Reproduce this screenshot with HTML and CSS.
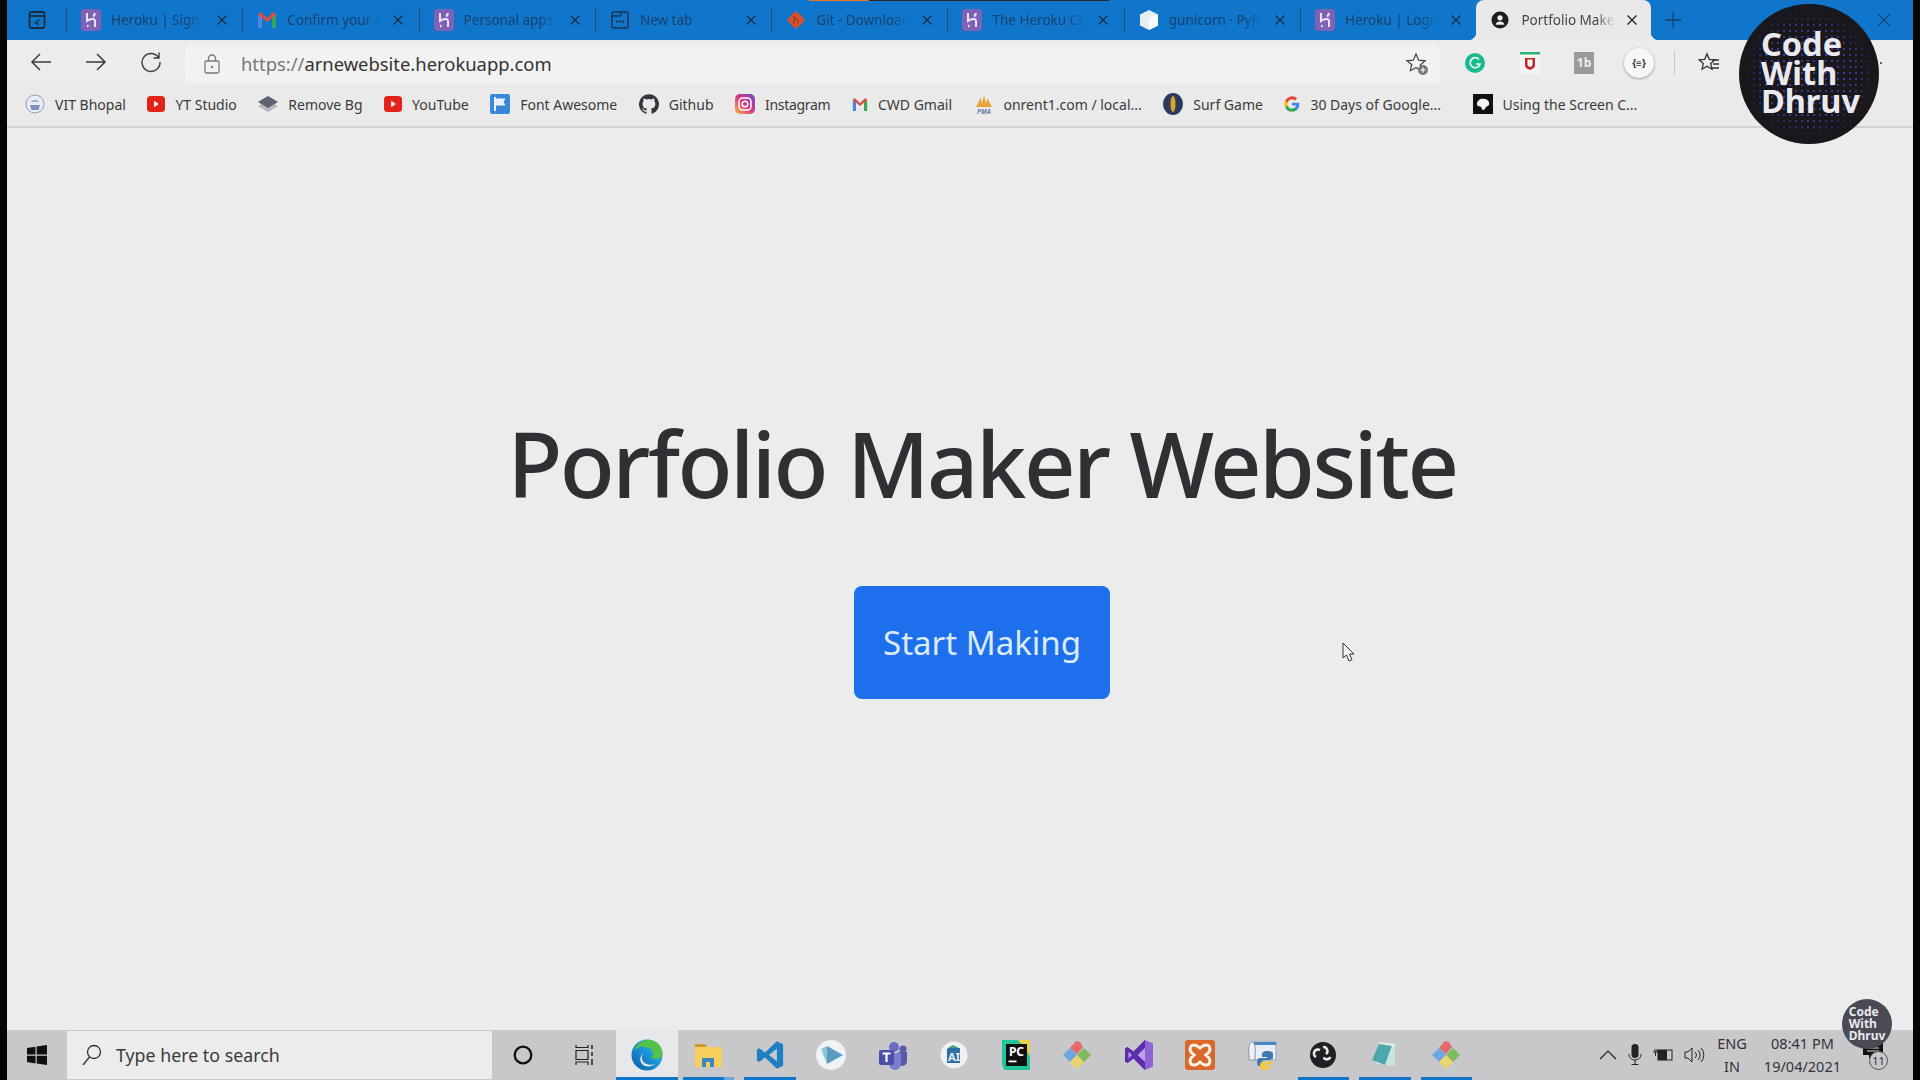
FILE: index.html
```html
<!DOCTYPE html>
<html lang="en">
<head>
    <meta charset="UTF-8">
    <title>Portfolio Maker</title>
    <link rel="stylesheet" href="styles.css">
</head>
<body>
    <svg class="defs" width="0" height="0">
        <symbol id="heroku" viewBox="0 0 20 22">
            <rect width="20" height="22" rx="3" fill="#7d62b5"/>
            <path d="M6 4v8c2-1.500 4-2.200 6-2 1.500.2 2 1 2 2.500V18M14 4c-.2 1.500-.8 2.600-2 3.500" fill="none" stroke="#e9e2f5" stroke-width="2"/>
            <path d="M6 15.500l2.500 1.500L6 18.500z" fill="#e9e2f5"/>
        </symbol>
        <symbol id="gmail" viewBox="0 0 20 18">
            <path d="M1 17V3.500L3.500 2 5 4v13z" fill="#4a86e0"/>
            <path d="M15 17V4l1.500-2L19 3.500V17z" fill="#3da35a"/>
            <path d="M1 3.500L3.500 1 10 7l6.500-6L19 3.500 10 11z" fill="#d9503f"/>
        </symbol>
        <symbol id="youtube" viewBox="0 0 20 18">
            <rect width="20" height="18" rx="4" fill="#e2231a"/>
            <path d="M8 5.500l5 3.500-5 3.500z" fill="#fff"/>
        </symbol>
        <symbol id="close" viewBox="0 0 12 12">
            <path d="M1.500 1.500l9 9M10.500 1.500l-9 9" fill="none" stroke="currentColor" stroke-width="1.300"/>
        </symbol>
    </svg>

    <div class="screen">
        <div class="tabstrip">
            <div class="loading-bar"><span></span></div>
            <div class="tab-actions">
                <svg width="20" height="20" viewBox="0 0 20 20"><rect x="2.500" y="2" width="15" height="16" rx="2" fill="none" stroke="#1b2b3a" stroke-width="1.800"/><path d="M3 6h14" stroke="#1b2b3a" stroke-width="1.800"/><path d="M12.500 9.500l-4 3.500 3 1.500" fill="none" stroke="#1b2b3a" stroke-width="1.400"/></svg>
            </div>
            <div class="tab">
                <svg class="tab-icon" width="20" height="22"><use href="#heroku"/></svg>
                <span class="tab-title">Heroku | Sign in</span>
                <svg class="tab-close" width="12" height="12"><use href="#close"/></svg>
            </div>
            <div class="tab">
                <svg class="tab-icon" width="20" height="18"><use href="#gmail"/></svg>
                <span class="tab-title">Confirm your account</span>
                <svg class="tab-close" width="12" height="12"><use href="#close"/></svg>
            </div>
            <div class="tab">
                <svg class="tab-icon" width="20" height="22"><use href="#heroku"/></svg>
                <span class="tab-title">Personal apps | Heroku</span>
                <svg class="tab-close" width="12" height="12"><use href="#close"/></svg>
            </div>
            <div class="tab">
                <svg class="tab-icon" width="20" height="20" viewBox="0 0 20 20"><path d="M4 2h12a2 2 0 0 1 2 2v12a2 2 0 0 1-2 2H4a2 2 0 0 1-2-2V4a2 2 0 0 1 2-2zM2 6h8l1.500-4" fill="none" stroke="#1b3550" stroke-width="1.500"/><path d="M6 11.500h8" stroke="#1b3550" stroke-width="1.800" stroke-dasharray="2 1"/></svg>
                <span class="tab-title">New tab</span>
                <svg class="tab-close" width="12" height="12"><use href="#close"/></svg>
            </div>
            <div class="tab">
                <svg class="tab-icon" width="20" height="20" viewBox="0 0 20 20"><rect x="3.500" y="3.500" width="13" height="13" rx="2" transform="rotate(45 10 10)" fill="#d9502f"/><path d="M8 5.500v9M8 7l4 3.500v3" fill="none" stroke="#8c3a2a" stroke-width="1.200"/></svg>
                <span class="tab-title">Git - Downloads</span>
                <svg class="tab-close" width="12" height="12"><use href="#close"/></svg>
            </div>
            <div class="tab">
                <svg class="tab-icon" width="20" height="22"><use href="#heroku"/></svg>
                <span class="tab-title">The Heroku CLI</span>
                <svg class="tab-close" width="12" height="12"><use href="#close"/></svg>
            </div>
            <div class="tab">
                <svg class="tab-icon" width="20" height="22" viewBox="0 0 20 22"><path d="M10 1l9 4.500v11L10 21l-9-4.500v-11z" fill="#e8eef2"/><path d="M10 10v11l9-4.500v-11z" fill="#fbfcfd"/></svg>
                <span class="tab-title">gunicorn · PyPI</span>
                <svg class="tab-close" width="12" height="12"><use href="#close"/></svg>
            </div>
            <div class="tab">
                <svg class="tab-icon" width="20" height="22"><use href="#heroku"/></svg>
                <span class="tab-title">Heroku | Login</span>
                <svg class="tab-close" width="12" height="12"><use href="#close"/></svg>
            </div>
            <div class="tab tab-active">
                <svg class="tab-icon" width="18" height="18" viewBox="0 0 18 18"><circle cx="9" cy="9" r="8.500" fill="#1b1d22"/><circle cx="9" cy="6.800" r="2.600" fill="#f1f1f1"/><path d="M4.500 13.800c.5-2.500 2.300-3.400 4.500-3.400s4 .9 4.500 3.400z" fill="#f1f1f1"/></svg>
                <span class="tab-title">Portfolio Maker</span>
                <svg class="tab-close" width="12" height="12"><use href="#close"/></svg>
            </div>
            <svg class="new-tab" width="18" height="18" viewBox="0 0 18 18"><path d="M9 1v16M1 9h16" stroke="#1d3f63" stroke-width="1.300"/></svg>
            <svg class="window-close" width="14" height="14" viewBox="0 0 12 12"><path d="M1 1l10 10M11 1L1 11" stroke="#1d3f63" stroke-width="1"/></svg>
        </div>

        <div class="toolbar">
            <svg class="nav-icon" width="22" height="20" viewBox="0 0 22 20"><path d="M21 10H2M10 2l-8 8 8 8" fill="none" stroke="#3a3a3a" stroke-width="1.500"/></svg>
            <svg class="nav-icon" width="22" height="20" viewBox="0 0 22 20"><path d="M1 10h19M12 2l8 8-8 8" fill="none" stroke="#3a3a3a" stroke-width="1.500"/></svg>
            <svg class="nav-icon" width="22" height="22" viewBox="0 0 22 22"><path d="M18.500 6.500A9 9 0 1 0 20 11M19 1.500v5.500h-5.500" fill="none" stroke="#3a3a3a" stroke-width="1.400"/></svg>
            <div class="address-bar">
                <svg width="16" height="20" viewBox="0 0 16 20"><rect x="1" y="7" width="14" height="12" rx="1.500" fill="none" stroke="#7a7a7a" stroke-width="1.300"/><path d="M4.500 7V4.500a3.500 3.500 0 0 1 7 0V7" fill="none" stroke="#7a7a7a" stroke-width="1.300"/><circle cx="8" cy="13" r="1.200" fill="#7a7a7a"/></svg>
                <span class="url"><span class="url-scheme">https://</span>arnewebsite.herokuapp.com</span>
                <svg class="fav-add" width="24" height="24" viewBox="0 0 24 24"><path d="M11 2l2.700 6.200 6.500.6-4.900 4.300 1 5.500-5.300-2.900-5.700 3 1.400-6.300L1.800 8.800l6.500-.6z" fill="none" stroke="#444" stroke-width="1.200"/><circle cx="18" cy="18" r="5" fill="#777"/><path d="M18 15.500v5M15.500 18h5" stroke="#fff" stroke-width="1.200"/></svg>
            </div>
            <div class="ext-icons">
                <span class="ext-slot"><svg width="20" height="20" viewBox="0 0 20 20"><circle cx="10" cy="10" r="10" fill="#17b98f"/><path d="M14 6.500A5 5 0 1 0 15 11h-4" fill="none" stroke="#e8f7f2" stroke-width="1.700"/></svg></span>
                <span class="ext-slot"><svg width="20" height="22" viewBox="0 0 20 22"><rect width="20" height="22" fill="#f4f4f4"/><rect width="20" height="2.500" fill="#27b573"/><path d="M5 6h10v7c0 3-2.500 4-5 5-2.500-1-5-2-5-5z" fill="#c22a2a"/><path d="M7.500 7.500h5v5c0 1.500-1.200 2-2.500 2.500-1.300-.5-2.500-1-2.500-2.500z" fill="#f4f4f4"/></svg></span>
                <span class="ext-slot"><svg width="20" height="22" viewBox="0 0 20 22"><rect width="20" height="22" fill="#9a9a9a"/><text x="10" y="15" class="ext-text">1b</text></svg></span>
                <span class="ext-slot ext-round"><svg width="16" height="12" viewBox="0 0 16 12"><text x="8" y="10" class="json-text">{≡}</text></svg></span>
            </div>
            <span class="toolbar-sep"></span>
            <svg class="favorites" width="22" height="22" viewBox="0 0 22 22"><path d="M9 2l2.300 5.300 5.700.5-4.300 3.800 1.300 5.600-5-3-5 3 1.300-5.600L1 7.800l5.700-.5z" fill="none" stroke="#333" stroke-width="1.300"/><path d="M14 8h7M15 12h6M14 16h7" stroke="#333" stroke-width="1.300"/></svg>
            <span class="more-dots"></span>
        </div>

        <div class="bookmarks">
            <div class="bookmark">
                <svg width="20" height="22" viewBox="0 0 20 22"><circle cx="10" cy="11" r="9" fill="#e9ecf4" stroke="#8d9ac0"/><path d="M5 12h10l-1.500 5h-7z" fill="#7f8fc0"/><path d="M6 9c1-3 7-3 8 0z" fill="#a5aec9"/></svg>
                <span>VIT Bhopal</span>
            </div>
            <div class="bookmark"><svg width="18" height="18"><use href="#youtube"/></svg><span>YT Studio</span></div>
            <div class="bookmark">
                <svg width="20" height="16" viewBox="0 0 20 16"><path d="M10 5l10 5-10 6L0 10z" fill="#b6bac0"/><path d="M10 0l10 6-10 6L0 6z" fill="#5d6470"/></svg>
                <span>Remove Bg</span>
            </div>
            <div class="bookmark"><svg width="18" height="18"><use href="#youtube"/></svg><span>YouTube</span></div>
            <div class="bookmark">
                <svg width="20" height="20" viewBox="0 0 20 20"><rect width="20" height="20" rx="2" fill="#3a87d8"/><path d="M5 3v14" stroke="#e8f1fb" stroke-width="2"/><path d="M6 4.500h9.500L13.500 8l2 3.500H6z" fill="#e8f1fb"/></svg>
                <span>Font Awesome</span>
            </div>
            <div class="bookmark">
                <svg width="20" height="20" viewBox="0 0 24 24"><path d="M12 .3a12 12 0 0 0-3.800 23.400c.6.100.8-.3.800-.6v-2c-3.300.7-4-1.600-4-1.600-.6-1.400-1.400-1.800-1.400-1.800-1-.7.100-.7.100-.7 1.200 0 1.900 1.200 1.900 1.200 1 1.800 2.800 1.300 3.500 1 0-.8.400-1.300.7-1.600-2.700-.3-5.500-1.300-5.500-6 0-1.200.5-2.300 1.300-3.100-.2-.4-.6-1.600 0-3.200 0 0 1-.3 3.400 1.200a11.500 11.500 0 0 1 6 0c2.300-1.500 3.300-1.200 3.300-1.200.6 1.600.2 2.800 0 3.200.9.800 1.300 1.900 1.300 3.200 0 4.600-2.800 5.600-5.500 5.900.5.400.9 1 .9 2.200v3.300c0 .3.100.7.800.6A12 12 0 0 0 12 .3" fill="#33373d"/></svg>
                <span>Github</span>
            </div>
            <div class="bookmark bookmark-tight">
                <svg width="20" height="20" viewBox="0 0 20 20"><defs><linearGradient id="insta" x1="0" y1="1" x2="1" y2="0"><stop offset="0" stop-color="#f7b545"/><stop offset=".5" stop-color="#d9377f"/><stop offset="1" stop-color="#6a4bc8"/></linearGradient></defs><rect width="20" height="20" rx="5" fill="url(#insta)"/><rect x="4" y="4" width="12" height="12" rx="3.500" fill="none" stroke="#fff" stroke-width="1.500"/><circle cx="10" cy="10" r="2.800" fill="none" stroke="#fff" stroke-width="1.500"/></svg>
                <span>Instagram</span>
            </div>
            <div class="bookmark"><svg width="16" height="15"><use href="#gmail"/></svg><span>CWD Gmail</span></div>
            <div class="bookmark">
                <svg width="20" height="20" viewBox="0 0 20 20"><path d="M2 13L7 3l1 10zM7 13l3-12 3 12zM12 13l1-9 5 9z" fill="#e9a23b"/><text x="10" y="19.500" class="pma-text">PMA</text></svg>
                <span>onrent1.com / local...</span>
            </div>
            <div class="bookmark">
                <svg width="20" height="22" viewBox="0 0 20 22"><ellipse cx="10" cy="11" rx="10" ry="11" fill="#2c3a5c"/><ellipse cx="10" cy="11" rx="2.500" ry="8" fill="#d6a72c"/></svg>
                <span>Surf Game</span>
            </div>
            <div class="bookmark">
                <svg width="16" height="18" viewBox="0 0 24 24"><path d="M23 12.300c0-.8-.1-1.600-.2-2.300H12v4.400h6.200a5.300 5.300 0 0 1-2.300 3.400v2.900h3.700c2.200-2 3.400-5 3.400-8.400z" fill="#4285f4"/><path d="M12 23.500c3.100 0 5.700-1 7.600-2.800l-3.700-2.900c-1 .7-2.400 1.100-3.900 1.100-3 0-5.500-2-6.400-4.700H1.800v2.900A11.500 11.500 0 0 0 12 23.500z" fill="#34a853"/><path d="M5.600 14.200a6.900 6.900 0 0 1 0-4.400V6.900H1.800a11.500 11.500 0 0 0 0 10.200z" fill="#fbbc05"/><path d="M12 5c1.700 0 3.200.6 4.400 1.700l3.300-3.300A11.500 11.500 0 0 0 1.800 6.900l3.800 2.900C6.500 7 9 5 12 5z" fill="#ea4335"/></svg>
                <span>30 Days of Google...</span>
            </div>
            <div class="bookmark bookmark-last">
                <svg width="20" height="20" viewBox="0 0 20 20"><rect width="20" height="20" fill="#111"/><path d="M4 10c0-4 4-6 8-5 3 .7 5 3 4 6-1 1-2 1-3 2s-1 3-3 3c-1 0-1-2-2-3s-4 0-4-3z" fill="#f3f3f3"/></svg>
                <span>Using the Screen C...</span>
            </div>
        </div>

        <main class="page">
            <h1 class="title">Porfolio Maker Website</h1>
            <a class="start-btn">Start Making</a>
        </main>

        <div class="taskbar">
            <div class="start-slot">
                <svg width="20" height="20" viewBox="0 0 20 20"><path d="M0 3l8.500-1.300v7.800H0zM9.700 1.500L20 0v9.500H9.700zM0 10.700h8.500v7.800L0 17zM9.700 10.700H20V20L9.700 18.500z" fill="#101010"/></svg>
            </div>
            <div class="search-box">
                <svg width="20" height="22" viewBox="0 0 20 22"><circle cx="12" cy="8" r="6.500" fill="none" stroke="#333" stroke-width="1.300"/><path d="M7.500 13L1 21" stroke="#333" stroke-width="1.300"/></svg>
                <span>Type here to search</span>
            </div>
            <div class="sys-slot"><svg width="20" height="20" viewBox="0 0 20 20"><circle cx="10" cy="10" r="8.300" fill="none" stroke="#111" stroke-width="2.300"/></svg></div>
            <div class="sys-slot">
                <svg width="20" height="20" viewBox="0 0 20 20"><path d="M2 0v2.500h12V0M2 5.500h12v9H2zM2 20v-3h12v3" fill="none" stroke="#222" stroke-width="1.200"/><path d="M18 0v4M18 7v4M18 14v6" stroke="#222" stroke-width="1.500"/></svg>
            </div>
            <div class="app-slot app-current">
                <svg width="32" height="32" viewBox="0 0 32 32"><defs><linearGradient id="edge" x1="0" y1="1" x2="1" y2="0"><stop offset="0" stop-color="#0c59a4"/><stop offset=".6" stop-color="#1b9ce0"/><stop offset="1" stop-color="#35c1f1"/></linearGradient></defs><circle cx="16" cy="16" r="15.500" fill="url(#edge)"/><path d="M3 13C5 4 13 .5 18 .8c8 .4 13.500 7 13.500 13.700 0 3.500-3 5.500-6.500 5.500-3 0-5-1-5-2.500 3-1 2.500-5-1-7.500C13 6 5 8 3 13z" fill="#55c14a"/><path d="M15 13c-4 1-5 5-3.500 8.500S19 27 24 25c-5 4-13 3-14.500-3-1-4 1.500-8 5.500-9z" fill="#e6e8ea"/></svg>
            </div>
            <div class="app-slot app-open app-split">
                <svg width="28" height="28" viewBox="0 0 28 28"><path d="M1 3h10l2 3H1z" fill="#c99a27"/><rect x="1" y="6" width="27" height="20" fill="#f6cf5c"/><path d="M8 26v-9h12v9h-4v-5h-4v5z" fill="#3c86c2"/></svg>
            </div>
            <div class="app-slot app-open">
                <svg width="30" height="30" viewBox="0 0 24 24"><path d="M17.500 1L8 10 3.500 6.500 1.500 7.500v9l2 1L8 14l9.500 9 5-2.400V3.400zM17.500 7v10L11 12z" fill="#1f7fc4"/></svg>
            </div>
            <div class="app-slot">
                <svg width="30" height="30" viewBox="0 0 30 30"><ellipse cx="15" cy="15" rx="15" ry="15" fill="#eef3f6"/><path d="M11 6l16 9-16 9z" fill="#5a9cc0"/><path d="M5 9l6-3v18z" fill="#8cc6d9"/></svg>
            </div>
            <div class="app-slot">
                <svg width="30" height="30" viewBox="0 0 30 30"><circle cx="16" cy="7" r="5" fill="#6a6cc0"/><circle cx="25" cy="9" r="3.500" fill="#585aa6"/><path d="M20 12h9v9a5 5 0 0 1-9 3z" fill="#585aa6"/><path d="M9 13h14v11a6 6 0 0 1-12 0z" fill="#7b7dd0"/><rect x="1" y="10" width="15" height="15" rx="2" fill="#4c4fa8"/><path d="M4.500 13.500h8M8.500 13.500V22" stroke="#fff" stroke-width="2.200"/></svg>
            </div>
            <div class="app-slot">
                <svg width="28" height="28" viewBox="0 0 28 28"><circle cx="14" cy="14" r="13.500" fill="#f1f1f1"/><path d="M7 8l4-3 4 2h5v15H7z" fill="#2e6fa8"/><path d="M9 7l4-3 6 3z" fill="#44a870"/><text x="14" y="20" class="ai-text">AI</text></svg>
            </div>
            <div class="app-slot">
                <svg width="28" height="30" viewBox="0 0 28 30"><path d="M0 0h20l8 4v26H2L0 24z" fill="#21c79a"/><path d="M16 0h12v16z" fill="#e8d24a"/><rect x="4" y="4" width="21" height="22" fill="#111"/><text x="14.500" y="16" class="pc-text">PC</text><rect x="6.500" y="20.500" width="8" height="1.800" fill="#fff"/></svg>
            </div>
            <div class="app-slot">
                <svg width="30" height="30" viewBox="0 0 30 30"><path d="M8 8l6-7 4 1 3 5-6 7z" fill="#e26a6a"/><path d="M1 15l7-7 7 7-7 7z" fill="#6ea6e0"/><path d="M15 15l7-7 7 7-7 7z" fill="#7cbb5e"/><path d="M8 22l7-7 7 7-7 7z" fill="#ebd46c"/></svg>
            </div>
            <div class="app-slot">
                <svg width="30" height="30" viewBox="0 0 30 30"><path d="M21 0l8 3.500v23L21 30 9.500 18.500 3.500 23 1 21.500v-13L3.500 7l6 4.500z" fill="#8f62d6"/><path d="M21 0L9.500 11.500l-6-4.500L1 8.500v13L3.500 23l6-4.500L21 30z" fill="#5b2da8"/><path d="M21 8v14l-7.500-7zM4.500 11.500v7L8 15z" fill="#bba0e8"/></svg>
            </div>
            <div class="app-slot">
                <svg width="30" height="30" viewBox="0 0 30 30"><rect width="30" height="30" rx="3" fill="#d9692b"/><path d="M6 6c3-2 6-1 9 2 3-3 6-4 9-2 2 3 1 6-3 9 4 3 5 6 3 9-3 2-6 1-9-2-3 3-6 4-9 2-2-3-1-6 3-9-4-3-5-6-3-9z" fill="none" stroke="#fdf0e4" stroke-width="3"/></svg>
            </div>
            <div class="app-slot">
                <svg width="32" height="32" viewBox="0 0 32 32"><rect x="8" y="3" width="22" height="18" fill="#e8eef5" stroke="#8aa9c9"/><rect x="8" y="3" width="22" height="3" fill="#4a86c0"/><path d="M6 2c3 3 4 7 3 13v6H3v-6C2 9 3 5 6 2z" fill="#eef1f5" stroke="#8b93a0"/><path d="M21 12c-4 0-5 2-5 4v2h5v1h-7c-2 0-3 1-3 4s1 4 3 4h2v-3c0-2 1-3 3-3h5c2 0 3-1 3-3v-3c0-2-2-3-6-3z" fill="#3f7bb0"/><path d="M26 20v3c0 2-1 3-3 3h-5v1h6v1c0 2-2 3-5 3s-5-1-5-3v-2c0-2 1-3 3-3h5c2 0 3-1 3-3z" fill="#f2c83f"/></svg>
            </div>
            <div class="app-slot app-open">
                <svg width="26" height="26" viewBox="0 0 26 26"><circle cx="13" cy="13" r="13" fill="#1f1f24"/><path d="M13 5a4 4 0 0 1 3 7M20.500 15a4 4 0 0 1-7 .5M6 15a4 4 0 0 1 4-7" fill="none" stroke="#e8e8e8" stroke-width="2.600"/></svg>
            </div>
            <div class="app-slot app-open">
                <svg width="28" height="28" viewBox="0 0 28 28"><path d="M8 1l16 2v22L5 22z" fill="#e6ebe6"/><path d="M1 19L8 3l13 2-7 19z" fill="#4da8ad"/><path d="M14 24l7-19 3 1v19z" fill="#c9e3e0"/></svg>
            </div>
            <div class="app-slot app-open">
                <svg width="30" height="30" viewBox="0 0 30 30"><path d="M8 8l6-7 4 1 3 5-6 7z" fill="#e26a6a"/><path d="M1 15l7-7 7 7-7 7z" fill="#6ea6e0"/><path d="M15 15l7-7 7 7-7 7z" fill="#7cbb5e"/><path d="M8 22l7-7 7 7-7 7z" fill="#ebd46c"/></svg>
            </div>
            <div class="tray">
                <svg width="18" height="10" viewBox="0 0 18 10"><path d="M1 9l8-8 8 8" fill="none" stroke="#222" stroke-width="1.200"/></svg>
                <svg width="14" height="22" viewBox="0 0 14 22"><rect x="3.500" y="0" width="7" height="14" rx="3.500" fill="#222"/><path d="M1 10c0 4 3 6 6 6s6-2 6-6M7 16v4M3.500 20.500h7" fill="none" stroke="#222" stroke-width="1"/></svg>
                <svg width="20" height="14" viewBox="0 0 20 14"><rect x="5" y="2" width="14" height="10" fill="none" stroke="#222"/><rect x="5" y="2" width="9" height="10" fill="#222"/><path d="M0 4h5M2 1v3M4 1v3M2.500 4v4" stroke="#222"/></svg>
                <svg width="22" height="18" viewBox="0 0 22 18"><path d="M1 6h3l4-4v14l-4-4H1z" fill="none" stroke="#222"/><path d="M11 6a4 4 0 0 1 0 6M14 4a7 7 0 0 1 0 10M17 2a10 10 0 0 1 0 14" fill="none" stroke="#222"/></svg>
                <div class="tray-lang"><span>ENG</span><span>IN</span></div>
                <div class="tray-clock"><span>08:41 PM</span><span>19/04/2021</span></div>
                <div class="notify">
                    <svg width="20" height="18" viewBox="0 0 20 18"><path d="M0 0h20v14H9l-3 4v-4H0z" fill="#111"/><path d="M4 4h12M4 7h12M4 10h12" stroke="#ddd"/></svg>
                    <span class="notify-count">11</span>
                </div>
            </div>
        </div>
    </div>

    <div class="channel-logo channel-logo-big"><span>Code<br>With<br>Dhruv</span></div>
    <div class="channel-logo channel-logo-small"><span>Code<br>With<br>Dhruv</span></div>

    <svg class="cursor" width="14" height="20" viewBox="0 0 14 20"><path d="M1 1v15l3.500-3 2.500 6 3-1.300-2.500-5.700H12z" fill="#f2f2f2" stroke="#333" stroke-width="1"/></svg>
</body>
</html>
```

FILE: styles.css
```css
body {
    margin: 0;
    height: 1080px;
    overflow: hidden;
    background-color: #050505;
    font-family: "Noto Sans", "Open Sans", sans-serif;
    color: #333;
}
.defs {
    position: absolute;
}
.screen {
    margin-left: 7px;
    width: 1906px;
    height: 1080px;
    display: flex;
    flex-direction: column;
}

/* tabs */
.tabstrip {
    height: 40px;
    flex: none;
    display: flex;
    align-items: center;
    position: relative;
    background-color: #0f76cc;
}
.loading-bar {
    position: absolute;
    left: 802px;
    top: 0;
    width: 300px;
    height: 1px;
    background-color: #2a2a2a;
}
.loading-bar span {
    display: block;
    width: 60px;
    height: 1px;
    background-color: #e8752a;
}
.tab-actions {
    width: 59px;
    padding-left: 20px;
    box-sizing: border-box;
    display: flex;
}
.tab {
    width: 176.300px;
    height: 24px;
    flex: none;
    box-sizing: border-box;
    display: flex;
    align-items: center;
    padding-left: 14px;
    border-left: 1px solid #164f82;
    color: #18416b;
}
.tab-icon {
    flex: none;
}
.tab-title {
    width: 94px;
    margin-left: 10px;
    flex: none;
    font-size: 13.5px;
    white-space: nowrap;
    overflow: hidden;
    -webkit-mask-image: linear-gradient(to right, #000 80%, transparent);
    mask-image: linear-gradient(to right, #000 80%, transparent);
}
.tab-close {
    margin-left: 11px;
    flex: none;
    color: #16304a;
}
.tab-active {
    height: 40px;
    width: 175px;
    padding-left: 15px;
    border-left: none;
    border-radius: 8px 8px 0 0;
    position: relative;
    background-color: #e8e8e9;
    color: #444;
}
.tab-active::before, .tab-active::after {
    content: "";
    position: absolute;
    bottom: 0;
    width: 8px;
    height: 8px;
}
.tab-active::before {
    left: -8px;
    background: radial-gradient(circle at 0 0, transparent 8px, #e8e8e9 8.500px);
}
.tab-active::after {
    right: -8px;
    background: radial-gradient(circle at 100% 0, transparent 8px, #e8e8e9 8.500px);
}
.tab-active .tab-title {
    margin-left: 12px;
}
.tab-active .tab-close {
    color: #222;
}
.new-tab {
    margin-left: 13px;
}
.window-close {
    margin-left: auto;
    margin-right: 22px;
}

/* toolbar */
.toolbar {
    height: 44px;
    flex: none;
    display: flex;
    align-items: center;
    position: relative;
    background-color: #ececec;
}
.nav-icon {
    flex: none;
    margin-left: 23px;
    margin-right: 10px;
}
.address-bar {
    width: 1255px;
    height: 38px;
    margin-left: 13px;
    margin-top: 4px;
    box-sizing: border-box;
    padding-left: 19px;
    padding-right: 11px;
    display: flex;
    align-items: center;
    border-radius: 6px;
    background-color: #f2f2f2;
}
.url {
    margin-left: 21px;
    padding-bottom: 2px;
    font-size: 18.400px;
    color: #333;
}
.url-scheme {
    color: #777;
}
.fav-add {
    margin-left: auto;
}
.ext-icons {
    display: flex;
    margin-left: 8px;
    margin-top: 2px;
}
.ext-slot {
    width: 54.600px;
    height: 30px;
    display: flex;
    align-items: center;
    justify-content: center;
    position: relative;
}
.ext-round::before {
    content: "";
    position: absolute;
    left: 12px;
    top: 0;
    width: 30px;
    height: 30px;
    border-radius: 50%;
    background-color: #f7f7f7;
    box-shadow: 0 1px 3px rgba(0, 0, 0, 0.35);
}
.ext-round svg {
    position: relative;
}
.ext-text {
    font-size: 12px;
    font-weight: 700;
    fill: #eee;
    text-anchor: middle;
}
.json-text {
    font-size: 10px;
    font-weight: 700;
    fill: #333;
    text-anchor: middle;
}
.toolbar-sep {
    width: 1px;
    height: 24px;
    margin-left: 8px;
    margin-top: 2px;
    background-color: #c8c8c8;
}
.favorites {
    margin-left: 23px;
    margin-top: 2px;
}
.more-dots {
    position: absolute;
    right: 36px;
    top: 22px;
    width: 2px;
    height: 2px;
    border-radius: 50%;
    background-color: #333;
    box-shadow: 5px 0 0 #333;
}

/* bookmarks */
.bookmarks {
    height: 44px;
    flex: none;
    box-sizing: border-box;
    padding-left: 18px;
    padding-bottom: 2px;
    display: flex;
    align-items: center;
    gap: 21.500px;
    border-bottom: 2px solid #d2d2d2;
    background-color: #eaeaea;
    font-size: 14px;
    color: #3a3a3a;
}
.bookmark {
    display: flex;
    align-items: center;
    gap: 10px;
    white-space: nowrap;
}
.bookmark-tight span {
    letter-spacing: -0.300px;
}
.bookmark-last {
    margin-left: 10px;
}

/* page */
.page {
    flex: 1;
    display: flex;
    flex-direction: column;
    align-items: center;
    padding-left: 44px;
    padding-top: 281px;
    background-color: #ebecec;
}
.title {
    margin: 0;
    font-size: 90px;
    font-weight: 500;
    line-height: 108px;
    letter-spacing: -2.500px;
    color: #2f3033;
}
.start-btn {
    width: 256px;
    height: 113px;
    margin-top: 69px;
    display: flex;
    align-items: center;
    justify-content: center;
    border-radius: 8px;
    background-color: #1e6fec;
    color: #dcebff;
    font-size: 33px;
}

/* taskbar */
.taskbar {
    height: 50px;
    flex: none;
    display: flex;
    align-items: center;
    background-color: #c8c8cb;
}
.start-slot {
    width: 60px;
    padding-left: 20px;
    box-sizing: border-box;
    display: flex;
}
.search-box {
    width: 425px;
    height: 48px;
    box-sizing: border-box;
    padding-left: 15px;
    display: flex;
    align-items: center;
    gap: 14px;
    background-color: #ececec;
    font-size: 17.800px;
    color: #3a3a3a;
}
.sys-slot {
    width: 61px;
    display: flex;
    justify-content: center;
}
.app-slot {
    width: 61.500px;
    height: 50px;
    box-sizing: border-box;
    display: flex;
    align-items: center;
    justify-content: center;
    position: relative;
}
.app-slot:nth-child(5) {
    margin-left: 2px;
}
.app-open::after, .app-current::after {
    content: "";
    position: absolute;
    left: 5px;
    right: 5px;
    bottom: 0;
    height: 3px;
    background-color: #0f76cc;
}
.app-current {
    background-color: #e6e8ea;
}
.app-current::after {
    left: 0;
    right: 0;
}
.app-split::after {
    background: linear-gradient(to right, #0f76cc 80%, #6da5d8 80%);
}
.ai-text {
    font-size: 11px;
    font-weight: 700;
    fill: #e8eef5;
    text-anchor: middle;
}
.pc-text {
    font-size: 12px;
    font-weight: 700;
    fill: #fff;
    text-anchor: middle;
}
.pma-text {
    font-size: 6.500px;
    font-weight: 700;
    font-style: italic;
    fill: #6a7ba8;
    text-anchor: middle;
}
.tray {
    margin-left: auto;
    padding-right: 26px;
    display: flex;
    align-items: center;
    gap: 11px;
    font-size: 14.500px;
    color: #333;
}
.tray-lang, .tray-clock {
    display: flex;
    flex-direction: column;
    align-items: center;
    line-height: 23px;
}
.tray-clock {
    margin-left: 6px;
}
.notify {
    position: relative;
    width: 24px;
    margin-left: 11px;
    height: 28px;
}
.notify-count {
    position: absolute;
    left: 6px;
    top: 10px;
    width: 19px;
    height: 19px;
    box-sizing: border-box;
    display: flex;
    align-items: center;
    justify-content: center;
    border: 1px solid #555;
    border-radius: 50%;
    background-color: #c8c8cb;
    font-size: 11px;
}

/* overlays */
.channel-logo {
    position: absolute;
    display: flex;
    align-items: center;
    justify-content: center;
    border-radius: 50%;
    background-color: #19181d;
    background-image: radial-gradient(#3c3a96 32%, transparent 36%);
    background-size: 6px 6px;
    color: #e9e9ee;
    font-weight: 700;
}
.channel-logo-big {
    left: 1739px;
    top: 4px;
    width: 140px;
    height: 140px;
    box-sizing: border-box;
    padding-left: 3px;
    padding-bottom: 2px;
    font-size: 32.500px;
    line-height: 28.500px;
    box-shadow: inset 0 0 14px 14px #19181d;
}
.channel-logo-small {
    left: 1842px;
    top: 999px;
    width: 50px;
    height: 50px;
    font-size: 12px;
    line-height: 12px;
    background-color: #4a4a55;
    background-image: none;
}
.cursor {
    position: absolute;
    left: 1342px;
    top: 642px;
}
```
